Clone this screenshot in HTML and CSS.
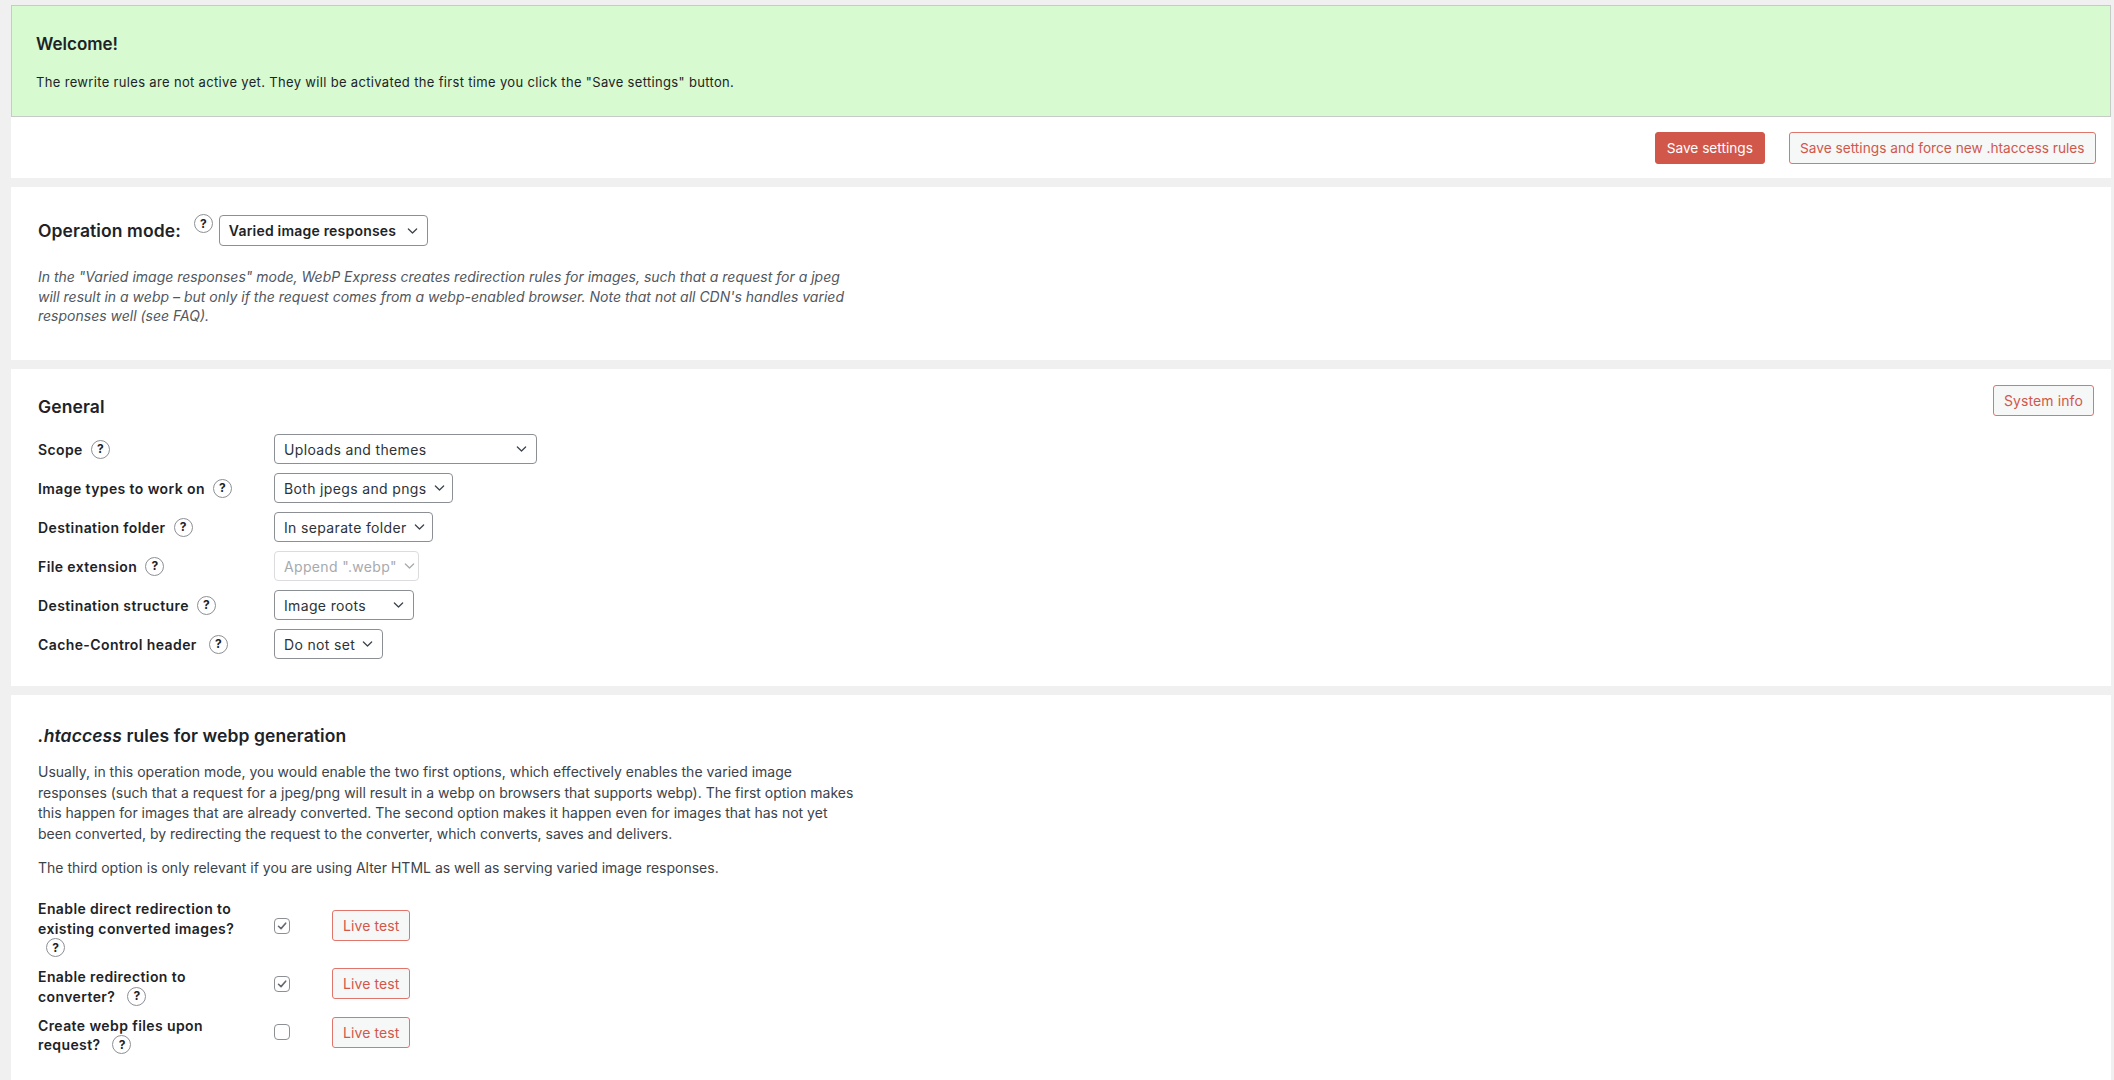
FILE: index.html
```html
<!DOCTYPE html>
<html lang="en">
<head>
<meta charset="utf-8">
<title>WebP Express Settings</title>
<link rel="stylesheet" href="styles.css">
</head>
<body>
<div class="wrap">

  <section class="box top-box">
    <div class="notice">
      <h3>Welcome!</h3>
      <p>The rewrite rules are not active yet. They will be activated the first time you click the "Save settings" button.</p>
    </div>
    <div class="actions">
      <button class="btn btn-primary">Save settings</button>
      <button class="btn btn-secondary">Save settings and force new .htaccess rules</button>
    </div>
  </section>

  <section class="box op-box">
    <div class="op-row">
      <h2>Operation mode:</h2>
      <span class="help help-raised">?</span>
      <span class="select select-strong w-op">Varied image responses<svg class="chev" viewBox="0 0 12 8"><path d="M1.5 1.8 L6 6.2 L10.5 1.8"/></svg></span>
    </div>
    <p class="description">In the "Varied image responses" mode, WebP Express creates redirection rules for images, such that a request for a jpeg<br>will result in a webp – but only if the request comes from a webp-enabled browser. Note that not all CDN's handles varied<br>responses well (see FAQ).</p>
  </section>

  <section class="box general-box">
    <div class="box-head">
      <h2>General</h2>
      <button class="btn btn-secondary btn-small">System info</button>
    </div>
    <div class="form-grid">
      <div class="label">Scope<span class="help">?</span></div>
      <div class="field"><span class="select w-scope">Uploads and themes<svg class="chev" viewBox="0 0 12 8"><path d="M1.5 1.8 L6 6.2 L10.5 1.8"/></svg></span></div>

      <div class="label">Image types to work on<span class="help">?</span></div>
      <div class="field"><span class="select w-types">Both jpegs and pngs<svg class="chev" viewBox="0 0 12 8"><path d="M1.5 1.8 L6 6.2 L10.5 1.8"/></svg></span></div>

      <div class="label">Destination folder<span class="help">?</span></div>
      <div class="field"><span class="select w-folder">In separate folder<svg class="chev" viewBox="0 0 12 8"><path d="M1.5 1.8 L6 6.2 L10.5 1.8"/></svg></span></div>

      <div class="label">File extension<span class="help">?</span></div>
      <div class="field"><span class="select select-disabled w-ext">Append ".webp"<svg class="chev" viewBox="0 0 12 8"><path d="M1.5 1.8 L6 6.2 L10.5 1.8"/></svg></span></div>

      <div class="label">Destination structure<span class="help">?</span></div>
      <div class="field"><span class="select w-structure">Image roots<svg class="chev" viewBox="0 0 12 8"><path d="M1.5 1.8 L6 6.2 L10.5 1.8"/></svg></span></div>

      <div class="label">Cache-Control header<span class="help help-wide">?</span></div>
      <div class="field"><span class="select w-cache">Do not set<svg class="chev" viewBox="0 0 12 8"><path d="M1.5 1.8 L6 6.2 L10.5 1.8"/></svg></span></div>
    </div>
  </section>

  <section class="box ht-box">
    <h2><em>.htaccess</em> rules for webp generation</h2>
    <p class="text first">Usually, in this operation mode, you would enable the two first options, which effectively enables the varied image<br>responses (such that a request for a jpeg/png will result in a webp on browsers that supports webp). The first option makes<br>this happen for images that are already converted. The second option makes it happen even for images that has not yet<br>been converted, by redirecting the request to the converter, which converts, saves and delivers.</p>
    <p class="text">The third option is only relevant if you are using Alter HTML as well as serving varied image responses.</p>

    <div class="check-grid">
      <div class="clabel">Enable direct redirection to existing converted images? <span class="help">?</span></div>
      <div class="cbox"><span class="checkbox checked"><svg viewBox="0 0 16 16"><path d="M4 8.3 L6.9 11 L12.2 4.8"/></svg></span></div>
      <div class="cbtn"><button class="btn btn-secondary btn-small">Live test</button></div>

      <div class="clabel">Enable redirection to converter? <span class="help">?</span></div>
      <div class="cbox"><span class="checkbox checked"><svg viewBox="0 0 16 16"><path d="M4 8.3 L6.9 11 L12.2 4.8"/></svg></span></div>
      <div class="cbtn"><button class="btn btn-secondary btn-small">Live test</button></div>

      <div class="clabel">Create webp files upon request? <span class="help">?</span></div>
      <div class="cbox"><span class="checkbox"></span></div>
      <div class="cbtn"><button class="btn btn-secondary btn-small">Live test</button></div>
    </div>
  </section>

</div>
</body>
</html>
```

FILE: styles.css
```css
* { box-sizing: border-box; }

html, body {
  margin: 0;
  background: #f0f0f1;
}

body {
  font-family: Inter, "Liberation Sans", "DejaVu Sans", sans-serif;
  color: #3c434a;
  font-size: 14px;
}

.wrap {
  display: flex;
  flex-direction: column;
  gap: 9px;
  padding: 5px 3px 0 11px;
}

.box {
  background: #ffffff;
}

h2 {
  margin: 0;
  font-size: 17.5px;
  font-weight: 600;
  color: #1d2327;
  line-height: 22px;
  letter-spacing: 0.1px;
}

/* ---------- top box ---------- */
.notice {
  background: #d7fad0;
  border: 1px solid #c6cbc6;
  padding: 27px 24px 25px;
}

.notice h3 {
  margin: 0 0 18px;
  font-size: 17px;
  font-weight: 600;
  line-height: 22px;
  color: #1d2327;
}

.notice p {
  margin: 0;
  font-size: 13px;
  line-height: 18px;
  letter-spacing: 0.33px;
  color: #1d2327;
}

.actions {
  display: flex;
  justify-content: flex-end;
  gap: 24px;
  padding: 15px 15px 14px;
}

/* ---------- buttons ---------- */
.btn {
  font-family: inherit;
  font-size: 13.7px;
  height: 32px;
  padding: 0 10.5px;
  border-radius: 3px;
  border: 1px solid #d1574a;
  line-height: 30px;
  cursor: pointer;
}

.btn-primary {
  background: #d1574a;
  color: #ffffff;
}

.btn-secondary {
  background: #f6f7f7;
  color: #d1574a;
  border-color: #e0766b;
}

.btn-small {
  height: 31px;
  font-size: 14px;
  padding: 0 10px;
  line-height: 29px;
  letter-spacing: 0.1px;
}

/* ---------- help icon ---------- */
.help {
  display: inline-flex;
  align-items: center;
  justify-content: center;
  width: 19px;
  height: 19px;
  margin-left: 8px;
  border: 1px solid #8c8f94;
  border-radius: 50%;
  background: #fff;
  font-size: 12px;
  font-weight: 700;
  color: #1d2327;
  line-height: 1;
  letter-spacing: 0;
  vertical-align: top;
}

.help-wide { margin-left: 12px; }

/* ---------- select ---------- */
.select {
  display: inline-flex;
  align-items: center;
  justify-content: space-between;
  gap: 7px;
  height: 30px;
  padding: 0 9px;
  border: 1px solid #8c8f94;
  border-radius: 4px;
  background: #fff;
  color: #2c3338;
  font-size: 14px;
  letter-spacing: 0.35px;
  white-space: nowrap;
}

.select .chev {
  width: 11px;
  height: 8px;
  flex: none;
  fill: none;
  stroke: #3c434a;
  stroke-width: 1.4;
  stroke-linecap: round;
  stroke-linejoin: round;
}

.select-strong {
  height: 31px;
  font-weight: 600;
  letter-spacing: 0.2px;
  color: #1d2327;
}

.select-disabled {
  border-color: #dcdcde;
  color: #a7aaad;
}
.select-disabled .chev { stroke: #a7aaad; }

.w-op { width: 209px; }
.w-scope { width: 263px; }
.w-types { width: 179px; }
.w-folder { width: 159px; }
.w-ext { width: 145px; }
.w-structure { width: 140px; }
.w-cache { width: 109px; }

/* ---------- operation mode box ---------- */
.op-box {
  padding: 28px 27px 34px;
}

.op-row {
  display: flex;
  align-items: center;
  height: 31px;
}

.help-raised {
  align-self: flex-start;
  margin-top: -1px;
  margin-left: 13px;
  margin-right: 6px;
}

.description {
  margin: 21px 0 0;
  font-size: 14px;
  font-style: italic;
  line-height: 19.5px;
  color: #50575e;
}

/* ---------- general box ---------- */
.general-box {
  padding: 16px 17px 22px 27px;
}

.box-head {
  display: flex;
  justify-content: space-between;
  align-items: flex-start;
}

.box-head h2 {
  margin-top: 11px;
}

.form-grid {
  display: grid;
  grid-template-columns: 236px auto;
  grid-auto-rows: 39px;
  align-items: center;
  justify-items: start;
  margin-top: 12px;
}

.label {
  font-size: 14px;
  font-weight: 600;
  letter-spacing: 0.4px;
  color: #1d2327;
  white-space: nowrap;
  display: flex;
  align-items: center;
}

/* ---------- htaccess box ---------- */
.ht-box {
  padding: 30px 27px 40px;
}

.text {
  margin: 14px 0 0;
  font-size: 14px;
  line-height: 20.6px;
  color: #3c434a;
}

.text.first {
  margin-top: 15.5px;
}

.check-grid {
  display: grid;
  grid-template-columns: 236px 58px auto;
  row-gap: 3.5px;
  align-items: center;
  justify-items: start;
  margin-top: 14.5px;
}

.clabel {
  width: 215px;
  padding-top: 6px;
  font-size: 14px;
  font-weight: 600;
  letter-spacing: 0.4px;
  line-height: 19.5px;
  color: #1d2327;
}

.checkbox {
  display: flex;
  align-items: center;
  justify-content: center;
  width: 16px;
  height: 16px;
  border: 1px solid #8c8f94;
  border-radius: 4px;
  background: #fff;
}

.checkbox svg {
  width: 14px;
  height: 14px;
  fill: none;
  stroke: #646970;
  stroke-width: 1.8;
  stroke-linecap: round;
  stroke-linejoin: round;
}
```
